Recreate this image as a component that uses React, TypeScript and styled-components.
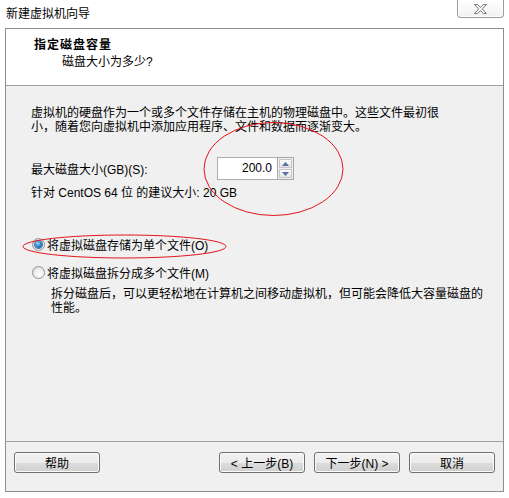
import styled, { createGlobalStyle } from 'styled-components'

const GlobalStyle = createGlobalStyle`
  html, body {
    margin: 0;
    padding: 0;
    background: #fff;
  }
  body {
    font-family: "Liberation Sans", "Noto Sans CJK SC", sans-serif;
    font-size: 12px;
    color: #000;
  }
`

const Window = styled.div`
  position: relative;
  width: 509px;
  height: 498px;
  display: flex;
  flex-direction: column;
  background: #fff;
  overflow: hidden;
`

const TitleBar = styled.div`
  height: 28px;
  flex: none;
  display: flex;
  align-items: flex-start;
  justify-content: space-between;
  padding: 0 5px 0 6px;
`

const Title = styled.span`
  line-height: 28px;
  font-size: 12px;
`

const CloseButton = styled.div`
  width: 45px;
  height: 17px;
  border: 1px solid #9a9a9a;
  border-top: none;
  border-radius: 0 0 4px 4px;
  background: linear-gradient(#ffffff, #f1f1f1);
  box-shadow: inset 0 0 0 1px #fff;
  display: flex;
  align-items: center;
  justify-content: center;
`

const Panel = styled.div`
  flex: 1;
  margin: 0 5px 6px 5px;
  border: 1px solid #8e8f8f;
  display: flex;
  flex-direction: column;
`

const Header = styled.div`
  height: 56px;
  flex: none;
  background: #fff;
  border-bottom: 1px solid #a0a0a0;
  padding: 8px 0 0 28px;
  box-sizing: border-box;
  height: 57px;
`

const HeaderTitle = styled.div`
  font-weight: bold;
  line-height: 17px;
  letter-spacing: 1px;
`

const HeaderSub = styled.div`
  line-height: 17px;
  margin-left: 28px;
`

const Content = styled.div`
  flex: 1;
  background: #f0f0f0;
  padding: 20px 0 0 25px;
  display: flex;
  flex-direction: column;
`

const Paragraph = styled.p<{ $indent?: number; $top?: number }>`
  margin: ${(p) => p.$top ?? 0}px 0 0 ${(p) => p.$indent ?? 0}px;
  line-height: 14px;
`

const SizeRow = styled.div`
  margin-top: 23px;
  display: flex;
  align-items: center;
  height: 23px;
`

const SizeLabel = styled.span`
  width: 186px;
`

const NumberBox = styled.div`
  width: 60px;
  height: 23px;
  box-sizing: border-box;
  border: 1px solid #abadb3;
  border-right: none;
  background: #fff;
  text-align: right;
  padding-right: 5px;
  line-height: 21px;
  font-size: 12px;
`

const Spinner = styled.div`
  width: 17px;
  height: 23px;
  box-sizing: border-box;
  border: 1px solid #a7a7a7;
  display: flex;
  flex-direction: column;
  gap: 1px;
  padding: 1px;
  background: #f0f0f0;
`

const SpinButton = styled.div`
  flex: 1;
  border: 1px solid #c6c6c6;
  background: linear-gradient(#fbfbfb, #e6e6e6);
  display: flex;
  align-items: center;
  justify-content: center;
`

const Hint = styled.div`
  margin-top: 6px;
  line-height: 14px;
`

const RadioRow = styled.label<{ $top: number }>`
  margin-top: ${(p) => p.$top}px;
  height: 16px;
  display: flex;
  align-items: center;
  gap: 2px;
  padding-left: 1px;
`

const RadioCircle = styled.span<{ $checked?: boolean }>`
  width: 13px;
  height: 13px;
  box-sizing: border-box;
  border-radius: 50%;
  border: 1px solid #8f9296;
  background: radial-gradient(circle at 60% 65%, #ffffff 0%, #f0f0f0 45%, #c9cbcd 100%);
  display: flex;
  align-items: center;
  justify-content: center;
  flex: none;

  ${(p) =>
    p.$checked
      ? `
    &::after {
      content: '';
      width: 7px;
      height: 7px;
      border-radius: 50%;
      background: radial-gradient(circle at 40% 35%, #9fe0ff 0%, #2f8ad6 45%, #0b3f7a 100%);
      box-shadow: 0 0 0 1px #4a6f95;
    }
  `
      : ''}
`

const Footer = styled.div`
  height: 39px;
  flex: none;
  border-top: 1px solid #a0a0a0;
  padding: 10px 8px 0 8px;
  display: flex;
  gap: 9px;
  background: #f0f0f0;
`

const Button = styled.button<{ $push?: boolean }>`
  width: 86px;
  height: 21px;
  padding: 0;
  border: 1px solid #707070;
  border-radius: 3px;
  background: linear-gradient(#f2f2f2 0%, #ebebeb 50%, #dddddd 50%, #cfcfcf 100%);
  box-shadow: inset 0 0 0 1px #fbfbfb;
  font-family: "Liberation Sans", "Noto Sans CJK SC", sans-serif;
  font-size: 12px;
  color: #000;
  margin-left: ${(p) => (p.$push ? 'auto' : '0')};
`

const Annotations = styled.svg`
  position: absolute;
  left: 0;
  top: 0;
  pointer-events: none;
`

const Arrow = ({ up }: { up?: boolean }) => (
  <svg width="7" height="4" viewBox="0 0 7 4">
    <polygon points={up ? '3.5,0 7,4 0,4' : '0,0 7,0 3.5,4'} fill="#5470a4" />
  </svg>
)

const App = () => (
  <>
    <GlobalStyle />
    <Window>
      <TitleBar>
        <Title>新建虚拟机向导</Title>
        <CloseButton>
          <svg width="13" height="10" viewBox="0 0 13 10">
            <polygon
              points="0.5,0.5 3.5,0.5 6.5,3.3 9.5,0.5 12.5,0.5 8.3,5 12.5,9.5 9.5,9.5 6.5,6.7 3.5,9.5 0.5,9.5 4.7,5"
              fill="#f6f6f6"
              stroke="#7a7a7a"
              strokeWidth="1"
            />
          </svg>
        </CloseButton>
      </TitleBar>
      <Panel>
        <Header>
          <HeaderTitle>指定磁盘容量</HeaderTitle>
          <HeaderSub>磁盘大小为多少?</HeaderSub>
        </Header>
        <Content>
          <Paragraph>
            虚拟机的硬盘作为一个或多个文件存储在主机的物理磁盘中。这些文件最初很
            <br />
            小，随着您向虚拟机中添加应用程序、文件和数据而逐渐变大。
          </Paragraph>
          <SizeRow>
            <SizeLabel>最大磁盘大小(GB)(S):</SizeLabel>
            <NumberBox>200.0</NumberBox>
            <Spinner>
              <SpinButton>
                <Arrow up />
              </SpinButton>
              <SpinButton>
                <Arrow />
              </SpinButton>
            </Spinner>
          </SizeRow>
          <Hint>针对 CentOS 64 位 的建议大小: 20 GB</Hint>
          <RadioRow $top={36}>
            <RadioCircle $checked />
            <span>将虚拟磁盘存储为单个文件(O)</span>
          </RadioRow>
          <RadioRow $top={12}>
            <RadioCircle />
            <span>将虚拟磁盘拆分成多个文件(M)</span>
          </RadioRow>
          <Paragraph $indent={20} $top={7}>
            拆分磁盘后，可以更轻松地在计算机之间移动虚拟机，但可能会降低大容量磁盘的
            <br />
            性能。
          </Paragraph>
        </Content>
        <Footer>
          <Button>帮助</Button>
          <Button $push>&lt; 上一步(B)</Button>
          <Button>下一步(N) &gt;</Button>
          <Button>取消</Button>
        </Footer>
      </Panel>
      <Annotations width="509" height="498" viewBox="0 0 509 498">
        <ellipse cx="273.5" cy="169" rx="69.5" ry="46.5" fill="none" stroke="#e3141c" strokeWidth="1" />
        <ellipse cx="124.5" cy="246.5" rx="101.5" ry="11.5" fill="none" stroke="#e3141c" strokeWidth="1" />
      </Annotations>
    </Window>
  </>
)

export default App
